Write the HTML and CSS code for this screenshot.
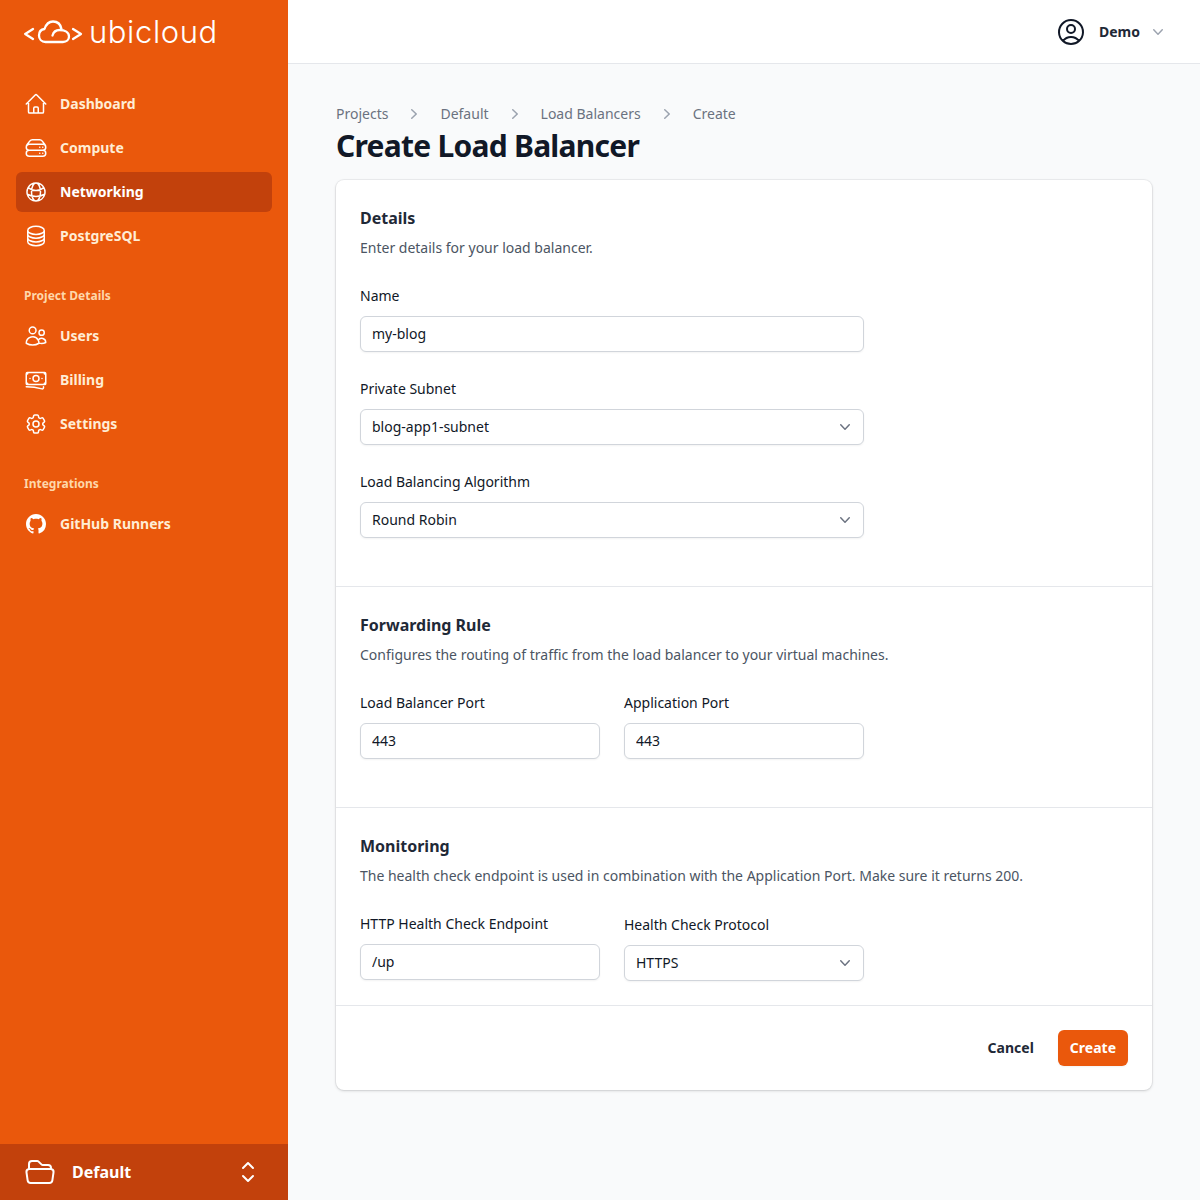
FILE: index.html
```html
<!DOCTYPE html>
<html lang="en">
<head>
  <meta charset="UTF-8" />
  <meta name="viewport" content="width=device-width, initial-scale=1.0"/>
  <title>Create Load Balancer - Ubicloud</title>
  <link rel="stylesheet" href="styles.css">
</head>
<body>
  <div class="app">
    <aside class="sidebar">
      <a class="logo" href="#">
        <svg class="logo-mark" viewBox="0 0 59 26" fill="none" stroke="currentColor" stroke-width="2.300" stroke-linecap="round" stroke-linejoin="round">
          <path d="M9 9 1.200 14 9 19"/>
          <path d="M49 9 57 14 49 19"/>
          <path d="M28.500 15.500C29.500 12 32 10 35.500 10 41 10 45 12.500 45 16.500 45 19.800 42.500 22 39 22H21.500C17.500 22 15 19 15 15.500 15 12 17 9.500 20.500 9 22 4.500 25.500 1.500 29 1.500 33 1.500 36.500 4 37.500 9"/>
        </svg>
        <span class="logo-text">ubicloud</span>
      </a>

      <nav class="nav">
        <a class="nav-item" href="#">
          <svg class="icon" viewBox="0 0 24 24"><path d="M2.25 12l8.954-8.955c.44-.439 1.152-.439 1.591 0L21.75 12M4.5 9.75v10.125c0 .621.504 1.125 1.125 1.125H9.75v-4.875c0-.621.504-1.125 1.125-1.125h2.25c.621 0 1.125.504 1.125 1.125V21h4.125c.621 0 1.125-.504 1.125-1.125V9.75M8.25 21h8.25"/></svg>
          Dashboard
        </a>
        <a class="nav-item" href="#">
          <svg class="icon" viewBox="0 0 24 24"><path d="M5.25 14.25h13.5m-13.5 0a3 3 0 01-3-3m3 3a3 3 0 100 6h13.5a3 3 0 100-6m-16.5-3a3 3 0 013-3h13.5a3 3 0 013 3m-19.5 0a4.5 4.5 0 01.9-2.7L5.737 5.1a3.375 3.375 0 012.7-1.35h7.126c1.062 0 2.062.5 2.7 1.35l2.587 3.45a4.5 4.5 0 01.9 2.7m0 0a3 3 0 01-3 3m0 3h.008v.008h-.008v-.008zm0-6h.008v.008h-.008v-.008zm-3 6h.008v.008h-.008v-.008zm0-6h.008v.008h-.008v-.008z"/></svg>
          Compute
        </a>
        <a class="nav-item active" href="#">
          <svg class="icon" viewBox="0 0 24 24"><path d="M12 21a9.004 9.004 0 008.716-6.747M12 21a9.004 9.004 0 01-8.716-6.747M12 21c2.485 0 4.5-4.03 4.5-9S14.485 3 12 3m0 18c-2.485 0-4.5-4.03-4.5-9S9.515 3 12 3m0 0a8.997 8.997 0 017.843 4.582M12 3a8.997 8.997 0 00-7.843 4.582m15.686 0A11.953 11.953 0 0112 10.5c-2.998 0-5.74-1.1-7.843-2.918m15.686 0A8.959 8.959 0 0121 12c0 .778-.099 1.533-.284 2.253m0 0A17.919 17.919 0 0112 16.5c-3.162 0-6.133-.815-8.716-2.247m0 0A9.015 9.015 0 013 12c0-1.605.42-3.113 1.157-4.418"/></svg>
          Networking
        </a>
        <a class="nav-item" href="#">
          <svg class="icon" viewBox="0 0 24 24"><path d="M20.25 6.375c0 2.278-3.694 4.125-8.25 4.125S3.75 8.653 3.75 6.375m16.5 0c0-2.278-3.694-4.125-8.25-4.125S3.75 4.097 3.75 6.375m16.5 0v11.25c0 2.278-3.694 4.125-8.25 4.125s-8.25-1.847-8.25-4.125V6.375m16.5 0v3.75m-16.5-3.750v3.750m16.5 0v3.750C20.25 16.153 16.556 18 12 18s-8.250-1.847-8.250-4.125v-3.750m16.500 0c0 2.278-3.694 4.125-8.250 4.125s-8.250-1.847-8.250-4.125"/></svg>
          PostgreSQL
        </a>
      </nav>

      <div class="nav-label">Project Details</div>
      <nav class="nav">
        <a class="nav-item" href="#">
          <svg class="icon" viewBox="0 0 24 24"><path d="M15 19.128a9.38 9.38 0 002.625.372 9.337 9.337 0 004.121-.952 4.125 4.125 0 00-7.533-2.493M15 19.128v-.003c0-1.113-.285-2.16-.786-3.07M15 19.128v.106A12.318 12.318 0 018.624 21c-2.331 0-4.512-.645-6.374-1.766l-.001-.109a6.375 6.375 0 0111.964-3.07M12 6.375a3.375 3.375 0 11-6.750 0 3.375 3.375 0 016.750 0zm8.250 2.250a2.625 2.625 0 11-5.250 0 2.625 2.625 0 015.250 0z"/></svg>
          Users
        </a>
        <a class="nav-item" href="#">
          <svg class="icon" viewBox="0 0 24 24"><path d="M2.25 18.75a60.07 60.07 0 0115.797 2.101c.727.198 1.453-.342 1.453-1.096V18.75M3.75 4.5v.75A.75.75 0 013 6h-.75m0 0v-.375c0-.621.504-1.125 1.125-1.125H20.25M2.25 6v9m18-10.500v.75c0 .414.336.75.75.75h.75m-1.500-1.500h.375c.621 0 1.125.504 1.125 1.125v9.750c0 .621-.504 1.125-1.125 1.125h-.375m1.500-1.500H21a.75.75 0 00-.75.75v.75m0 0H3.750m0 0h-.375a1.125 1.125 0 01-1.125-1.125V15m1.500 1.500v-.75A.75.75 0 003 15h-.75M15 10.500a3 3 0 11-6 0 3 3 0 016 0zm3 0h.008v.008H18V10.500zm-12 0h.008v.008H6V10.500z"/></svg>
          Billing
        </a>
        <a class="nav-item" href="#">
          <svg class="icon" viewBox="0 0 24 24"><path d="M9.594 3.94c.09-.542.56-.94 1.11-.94h2.593c.55 0 1.02.398 1.11.94l.213 1.281c.063.374.313.686.645.87.074.04.147.083.22.127.324.196.72.257 1.075.124l1.217-.456a1.125 1.125 0 011.37.49l1.296 2.247a1.125 1.125 0 01-.26 1.431l-1.003.827c-.293.24-.438.613-.431.992a6.759 6.759 0 010 .255c-.007.378.138.75.43.99l1.005.828c.424.35.534.954.26 1.43l-1.298 2.247a1.125 1.125 0 01-1.369.491l-1.217-.456c-.355-.133-.75-.072-1.076.124a6.57 6.57 0 01-.22.128c-.331.183-.581.495-.644.869l-.213 1.28c-.09.543-.56.941-1.11.941h-2.594c-.55 0-1.02-.398-1.11-.94l-.213-1.281c-.062-.374-.312-.686-.644-.87a6.52 6.52 0 01-.22-.127c-.325-.196-.72-.257-1.076-.124l-1.217.456a1.125 1.125 0 01-1.369-.49l-1.297-2.247a1.125 1.125 0 01.26-1.431l1.004-.827c.292-.24.437-.613.43-.992a6.932 6.932 0 010-.255c.007-.378-.138-.75-.43-.99l-1.004-.828a1.125 1.125 0 01-.26-1.43l1.297-2.247a1.125 1.125 0 011.37-.491l1.216.456c.356.133.751.072 1.076-.124.072-.044.146-.087.22-.128.332-.183.582-.495.644-.869l.214-1.281z"/><path d="M15 12a3 3 0 11-6 0 3 3 0 016 0z"/></svg>
          Settings
        </a>
      </nav>

      <div class="nav-label">Integrations</div>
      <nav class="nav">
        <a class="nav-item" href="#">
          <svg class="icon-github" viewBox="0 0 16 16"><path d="M8 0C3.58 0 0 3.58 0 8c0 3.54 2.29 6.53 5.47 7.59.4.07.55-.17.55-.38 0-.19-.01-.82-.01-1.49-2.01.37-2.53-.49-2.69-.94-.09-.23-.48-.94-.82-1.13-.28-.15-.68-.52-.01-.53.63-.01 1.08.58 1.23.82.72 1.21 1.87.87 2.33.66.07-.52.28-.87.51-1.07-1.78-.2-3.64-.89-3.64-3.95 0-.87.31-1.59.82-2.15-.08-.2-.36-1.02.08-2.12 0 0 .67-.21 2.2.82.64-.18 1.32-.27 2-.27.68 0 1.36.09 2 .27 1.53-1.04 2.2-.82 2.2-.82.44 1.1.16 1.92.08 2.12.51.56.82 1.27.82 2.15 0 3.07-1.87 3.75-3.65 3.95.29.25.54.73.54 1.48 0 1.07-.01 1.93-.01 2.2 0 .21.15.46.55.38A8.013 8.013 0 0016 8c0-4.42-3.58-8-8-8z"/></svg>
          GitHub Runners
        </a>
      </nav>

      <div class="project-switch">
        <svg class="icon-lg" viewBox="0 0 24 24"><path d="M3.75 9.776c.112-.017.227-.026.344-.026h15.812c.117 0 .232.009.344.026m-16.5 0a2.25 2.25 0 00-1.883 2.542l.857 6a2.25 2.25 0 002.227 1.932H19.05a2.25 2.25 0 002.227-1.932l.857-6a2.25 2.25 0 00-1.883-2.542m-16.5 0V6A2.25 2.25 0 016 3.75h3.879a1.5 1.5 0 011.06.44l2.122 2.12a1.5 1.5 0 001.06.44H18A2.25 2.25 0 0120.25 9v.776"/></svg>
        <span class="project-name">Default</span>
        <svg class="icon-lg" viewBox="0 0 24 24"><path d="M8.25 15L12 18.75 15.75 15m-7.500-6L12 5.250 15.750 9"/></svg>
      </div>
    </aside>

    <div class="content">
      <header class="topbar">
        <svg class="user-icon" viewBox="0 0 24 24"><path d="M17.982 18.725A7.488 7.488 0 0012 15.75a7.488 7.488 0 00-5.982 2.975m11.963 0a9 9 0 10-11.963 0m11.963 0A8.966 8.966 0 0112 21a8.966 8.966 0 01-5.982-2.275M15 9.75a3 3 0 11-6 0 3 3 0 016 0z"/></svg>
        <span class="user-name">Demo</span>
        <svg class="user-caret" viewBox="0 0 20 20"><path d="M5.23 7.21a.75.75 0 011.06.02L10 11.168l3.71-3.938a.75.75 0 111.08 1.04l-4.25 4.5a.75.75 0 01-1.08 0l-4.25-4.5a.75.75 0 01.02-1.06z"/></svg>
      </header>

      <main class="main">
        <div class="breadcrumb">
          <span>Projects</span>
          <svg class="crumb-sep" viewBox="0 0 20 20"><path d="M7.21 14.77a.75.75 0 01.02-1.06L11.168 10 7.23 6.29a.75.75 0 111.04-1.08l4.5 4.25a.75.75 0 010 1.08l-4.5 4.25a.75.75 0 01-1.06-.02z"/></svg>
          <span>Default</span>
          <svg class="crumb-sep" viewBox="0 0 20 20"><path d="M7.21 14.77a.75.75 0 01.02-1.06L11.168 10 7.23 6.29a.75.75 0 111.04-1.08l4.5 4.25a.75.75 0 010 1.08l-4.5 4.25a.75.75 0 01-1.06-.02z"/></svg>
          <span>Load Balancers</span>
          <svg class="crumb-sep" viewBox="0 0 20 20"><path d="M7.21 14.77a.75.75 0 01.02-1.06L11.168 10 7.23 6.29a.75.75 0 111.04-1.08l4.5 4.25a.75.75 0 010 1.08l-4.5 4.25a.75.75 0 01-1.06-.02z"/></svg>
          <span>Create</span>
        </div>
        <h1 class="page-title">Create Load Balancer</h1>

        <form class="card">
          <section class="section">
            <h2>Details</h2>
            <p>Enter details for your load balancer.</p>
            <div class="fields">
              <div class="field">
                <label for="name">Name</label>
                <input id="name" type="text" value="my-blog" />
              </div>
              <div class="field">
                <label for="subnet">Private Subnet</label>
                <div class="select-wrap">
                  <select id="subnet"><option>blog-app1-subnet</option></select>
                  <svg class="select-caret" viewBox="0 0 20 20"><path d="M5.23 7.21a.75.75 0 011.06.02L10 11.168l3.71-3.938a.75.75 0 111.08 1.04l-4.25 4.5a.75.75 0 01-1.08 0l-4.25-4.5a.75.75 0 01.02-1.06z"/></svg>
                </div>
              </div>
              <div class="field">
                <label for="algorithm">Load Balancing Algorithm</label>
                <div class="select-wrap">
                  <select id="algorithm"><option>Round Robin</option></select>
                  <svg class="select-caret" viewBox="0 0 20 20"><path d="M5.23 7.21a.75.75 0 011.06.02L10 11.168l3.71-3.938a.75.75 0 111.08 1.04l-4.25 4.5a.75.75 0 01-1.08 0l-4.25-4.5a.75.75 0 01.02-1.06z"/></svg>
                </div>
              </div>
            </div>
          </section>

          <section class="section">
            <h2>Forwarding Rule</h2>
            <p>Configures the routing of traffic from the load balancer to your virtual machines.</p>
            <div class="fields-row">
              <div class="field">
                <label for="lb-port">Load Balancer Port</label>
                <input id="lb-port" type="text" value="443" />
              </div>
              <div class="field">
                <label for="app-port">Application Port</label>
                <input id="app-port" type="text" value="443" />
              </div>
            </div>
          </section>

          <section class="section section-tight">
            <h2>Monitoring</h2>
            <p>The health check endpoint is used in combination with the Application Port. Make sure it returns 200.</p>
            <div class="fields-row">
              <div class="field">
                <label for="endpoint">HTTP Health Check Endpoint</label>
                <input id="endpoint" type="text" value="/up" />
              </div>
              <div class="field field-low">
                <label for="protocol">Health Check Protocol</label>
                <div class="select-wrap">
                  <select id="protocol"><option>HTTPS</option></select>
                  <svg class="select-caret" viewBox="0 0 20 20"><path d="M5.23 7.21a.75.75 0 011.06.02L10 11.168l3.71-3.938a.75.75 0 111.08 1.04l-4.25 4.5a.75.75 0 01-1.08 0l-4.25-4.5a.75.75 0 01.02-1.06z"/></svg>
                </div>
              </div>
            </div>
          </section>

          <div class="actions">
            <a class="btn-cancel" href="#">Cancel</a>
            <button class="btn-create" type="button">Create</button>
          </div>
        </form>
      </main>
    </div>
  </div>
</body>
</html>
```

FILE: styles.css
```css
* {
  box-sizing: border-box;
}

body {
  margin: 0;
  font-family: "Noto Sans", sans-serif;
  font-size: 14px;
  color: #111827;
  background: #f9fafb;
}

a {
  text-decoration: none;
  color: inherit;
}

.app {
  display: flex;
  min-height: 100vh;
}

/* sidebar */
.sidebar {
  width: 288px;
  flex-shrink: 0;
  display: flex;
  flex-direction: column;
  background: #ea580c;
  color: #ffedd5;
}

.logo {
  height: 84px;
  padding: 20px 0 0 24px;
  display: flex;
  align-items: flex-start;
  color: #fff;
}

.logo-mark {
  width: 59px;
  height: 26px;
}

.logo-text {
  margin-left: 6px;
  font-family: Inter, sans-serif;
  font-size: 31px;
  font-weight: 300;
  line-height: 24px;
  letter-spacing: 0.6px;
}

.nav {
  display: flex;
  flex-direction: column;
  gap: 4px;
  padding: 0 16px;
}

.nav-item {
  height: 40px;
  padding: 0 8px;
  display: flex;
  align-items: center;
  gap: 12px;
  border-radius: 6px;
  font-weight: 700;
  line-height: 24px;
}

.nav-item.active {
  background: #c2410c;
  color: #fff;
}

.icon, .icon-lg {
  fill: none;
  stroke: #fff;
  stroke-width: 1.5;
  stroke-linecap: round;
  stroke-linejoin: round;
  flex-shrink: 0;
}

.icon {
  width: 24px;
  height: 24px;
}

.icon-lg {
  width: 32px;
  height: 32px;
}

.icon-github {
  width: 20px;
  height: 20px;
  margin: 0 2px;
  fill: #fff;
}

.nav-label {
  margin: 28px 0 8px;
  padding-left: 24px;
  font-size: 12px;
  font-weight: 700;
  line-height: 24px;
  color: #fed7aa;
}

.project-switch {
  margin-top: auto;
  height: 56px;
  padding: 0 24px;
  display: flex;
  align-items: center;
  background: #c2410c;
  color: #fff;
}

.project-name {
  flex: 1;
  margin-left: 16px;
  font-size: 16px;
  font-weight: 700;
}

/* top bar */
.content {
  flex: 1;
  min-width: 0;
}

.topbar {
  height: 64px;
  padding-right: 32px;
  display: flex;
  align-items: center;
  justify-content: flex-end;
  background: #fff;
  border-bottom: 1px solid #e5e7eb;
}

.user-icon {
  width: 32px;
  height: 32px;
  margin-top: 1px;
  fill: none;
  stroke: #111827;
  stroke-width: 1.5;
  stroke-linecap: round;
  stroke-linejoin: round;
}

.user-name {
  margin: 0 8px 0 12px;
  font-weight: 700;
  color: #1f2937;
}

.user-caret {
  width: 20px;
  height: 20px;
  margin-top: 1px;
  fill: #9ca3af;
}

/* main */
.main {
  padding: 40px 48px;
}

.breadcrumb {
  display: flex;
  align-items: center;
  gap: 16px;
  line-height: 20px;
  color: #6b7280;
}

.crumb-sep {
  width: 20px;
  height: 20px;
  fill: #9ca3af;
}

.page-title {
  margin: 4px 0 16px;
  font-size: 30px;
  font-weight: 700;
  line-height: 36px;
  letter-spacing: -0.75px;
}

.card {
  background: #fff;
  border-radius: 8px;
  box-shadow: 0 0 0 1px rgba(17, 24, 39, 0.05), 0 1px 3px rgba(0, 0, 0, 0.15);
}

.section {
  padding: 26px 24px 48px;
  border-bottom: 1px solid #e5e7eb;
}

.section-tight {
  padding-bottom: 24px;
}

.section h2 {
  margin: 0;
  font-size: 16px;
  font-weight: 700;
  line-height: 24px;
  color: #1f2937;
}

.section p {
  margin: 8px 0 26px;
  line-height: 20px;
  color: #4b5563;
}

.fields {
  width: 504px;
  display: flex;
  flex-direction: column;
  gap: 25px;
}

.fields-row {
  width: 504px;
  display: grid;
  grid-template-columns: 1fr 1fr;
  gap: 24px;
}

.field label {
  display: block;
  margin-bottom: 8px;
  line-height: 24px;
}

.field-low {
  margin-top: 1px;
}

.field input, .field select {
  display: block;
  width: 100%;
  height: 36px;
  padding: 0 11px 2px;
  font: inherit;
  color: #111827;
  background: #fff;
  border: 1px solid #d1d5db;
  border-radius: 6px;
  box-shadow: 0 1px 2px rgba(0, 0, 0, 0.05);
  appearance: none;
  outline: none;
}

.select-wrap {
  position: relative;
}

.select-caret {
  position: absolute;
  right: 9px;
  top: 8px;
  width: 20px;
  height: 20px;
  fill: #6b7280;
}

.actions {
  padding: 24px;
  display: flex;
  justify-content: flex-end;
  align-items: center;
  gap: 24px;
}

.btn-cancel {
  font-weight: 700;
  line-height: 24px;
  color: #1f2937;
}

.btn-create {
  height: 36px;
  padding: 0 12px 2px;
  font: inherit;
  font-weight: 700;
  color: #fff;
  background: #ea580c;
  border: none;
  border-radius: 6px;
  box-shadow: 0 1px 2px rgba(0, 0, 0, 0.05);
}
```
